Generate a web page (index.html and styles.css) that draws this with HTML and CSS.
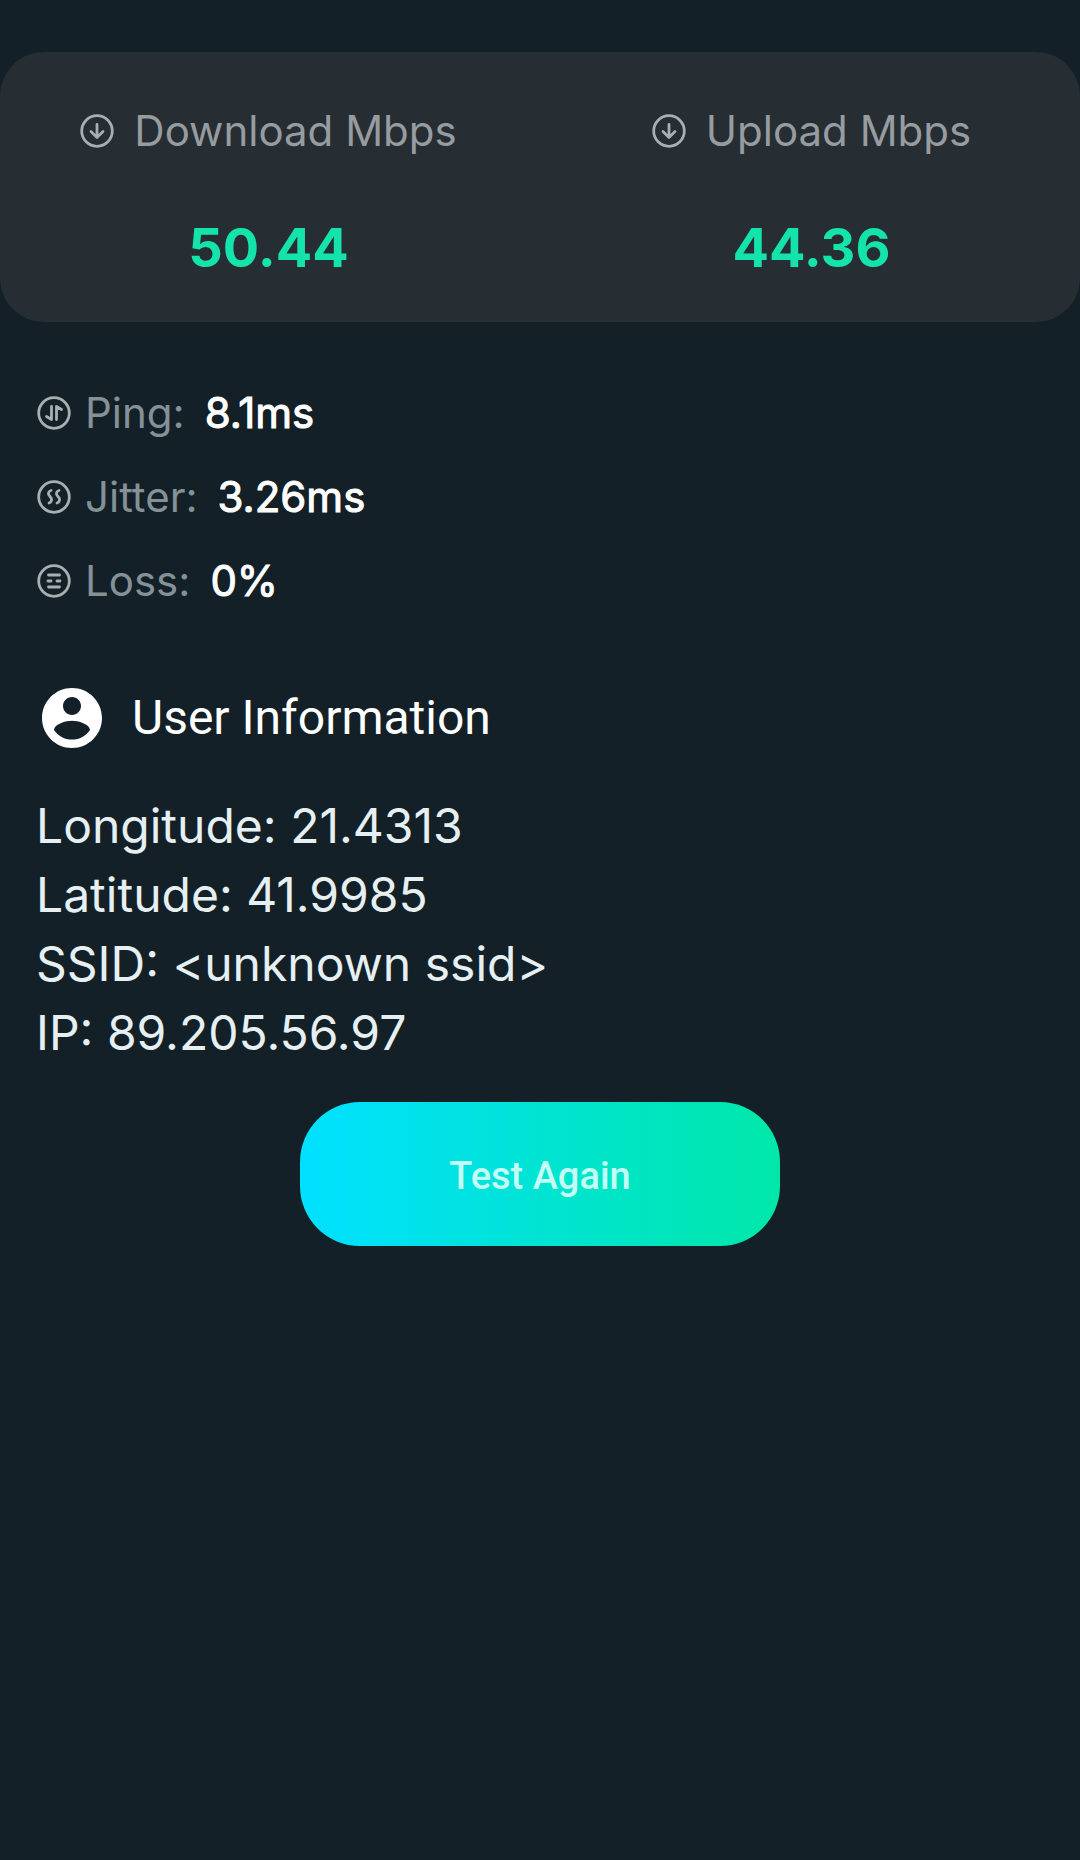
FILE: index.html
```html
<!DOCTYPE html>
<html lang="en">
<head>
  <meta charset="utf-8">
  <meta name="viewport" content="width=device-width, initial-scale=1">
  <title>Speed Test Results</title>
  <link rel="stylesheet" href="styles.css">
</head>
<body>
  <main class="page">
    <section class="speeds">
      <div class="speed">
        <h2 class="speed-label">
          <svg class="icon" viewBox="0 0 34 34" aria-hidden="true"><circle cx="17" cy="17" r="15.300"/><path d="M17 10.500v13M11 17.500l6 6 6-6"/></svg>
          Download Mbps
        </h2>
        <p class="speed-value">50.44</p>
      </div>
      <div class="speed">
        <h2 class="speed-label">
          <svg class="icon" viewBox="0 0 34 34" aria-hidden="true"><circle cx="17" cy="17" r="15.300"/><path d="M17 10.500v13M11 17.500l6 6 6-6"/></svg>
          Upload Mbps
        </h2>
        <p class="speed-value">44.36</p>
      </div>
    </section>

    <dl class="metrics">
      <div class="metric">
        <dt class="metric-label">
          <svg class="icon" viewBox="0 0 34 34" aria-hidden="true"><circle cx="17" cy="17" r="15.300"/><path d="M14.500 10.500v13L9.500 20.500M19.500 23.500v-13l5 3"/></svg>
          Ping:
        </dt>
        <dd class="metric-value">8.1ms</dd>
      </div>
      <div class="metric">
        <dt class="metric-label">
          <svg class="icon" viewBox="0 0 34 34" aria-hidden="true"><circle cx="17" cy="17" r="15.300"/><path d="M14 10.500c-3 1-3.500 3.500-1 6s2 5.500-1 6.500M22 10.500c-3 1-3.500 3.500-1 6s2 5.500-1 6.500"/></svg>
          Jitter:
        </dt>
        <dd class="metric-value">3.26ms</dd>
      </div>
      <div class="metric">
        <dt class="metric-label">
          <svg class="icon" viewBox="0 0 34 34" aria-hidden="true"><circle cx="17" cy="17" r="15.300"/><path d="M11.500 11h11M11 17h3M20 17h3M11.500 23h11"/></svg>
          Loss:
        </dt>
        <dd class="metric-value">0%</dd>
      </div>
    </dl>

    <section class="user">
      <h2 class="user-title">
        <svg class="user-icon" viewBox="2 2 20 20" aria-hidden="true"><path d="M12 2C6.480 2 2 6.480 2 12s4.480 10 10 10 10-4.480 10-10S17.520 2 12 2zm0 3c1.660 0 3 1.340 3 3s-1.340 3-3 3-3-1.340-3-3 1.340-3 3-3zm0 14.200c-2.500 0-4.710-1.280-6-3.220.030-1.990 4-3.080 6-3.080 1.990 0 5.970 1.090 6 3.080-1.290 1.940-3.500 3.220-6 3.220z"/></svg>
        User Information
      </h2>
      <ul class="user-details">
        <li>Longitude: 21.4313</li>
        <li>Latitude: 41.9985</li>
        <li>SSID: &lt;unknown ssid&gt;</li>
        <li>IP: 89.205.56.97</li>
      </ul>
    </section>

    <button class="test-button" type="button">Test Again</button>
  </main>
</body>
</html>
```
FILE: styles.css
```css
* {
  box-sizing: border-box;
  margin: 0;
  padding: 0;
}

body {
  min-height: 100vh;
  background: #142027;
  color: #e6f0f3;
  font-family: Inter, "Liberation Sans", sans-serif;
}

.page {
  display: flex;
  flex-direction: column;
  padding: 52px 0;
}

.speeds {
  display: grid;
  grid-template-columns: 1fr 1fr;
  gap: 6px;
  padding: 51px 0 40px;
  border-radius: 44px;
  background: #262d33;
}

.speed {
  display: flex;
  flex-direction: column;
  align-items: center;
  gap: 55px;
}

.speed-label {
  display: flex;
  align-items: center;
  gap: 20px;
  color: #969c9f;
  font-size: 42px;
  font-weight: 400;
  line-height: 56px;
}

.speed-value {
  color: #14e4ac;
  font-size: 54px;
  font-weight: 700;
  line-height: 68px;
}

.icon {
  flex: none;
  width: 34px;
  height: 34px;
  fill: none;
  stroke: #a6afb1;
  stroke-width: 2.8;
  stroke-linecap: round;
  stroke-linejoin: round;
}

.metrics {
  padding: 49px 37px 0;
}

.metric {
  display: flex;
  align-items: center;
  gap: 20px;
  font-size: 42px;
  line-height: 84px;
}

.metric-label {
  display: flex;
  align-items: center;
  gap: 14px;
  color: #849297;
  font-weight: 400;
}

.metric-value {
  color: #fff;
  font-weight: 400;
  -webkit-text-stroke: 1px #fff;
}

.user {
  padding: 65px 36px 0;
}

.user-title {
  display: flex;
  align-items: center;
  gap: 30px;
  padding-left: 6px;
  color: #fff;
  font-family: Roboto, "Liberation Sans", sans-serif;
  font-size: 48px;
  font-weight: 400;
  line-height: 60px;
}

.user-icon {
  flex: none;
  width: 60px;
  height: 60px;
  fill: #fff;
}

.user-details {
  padding-top: 43px;
  font-size: 48px;
  font-weight: 400;
  line-height: 69px;
  list-style: none;
}

.test-button {
  align-self: center;
  width: 480px;
  max-width: 100%;
  height: 144px;
  margin-top: 35px;
  padding-top: 4px;
  border: 0;
  border-radius: 60px;
  background: linear-gradient(90deg, #00e0ff, #00e7a8);
  color: #c4fff6;
  font-family: Roboto, "Liberation Sans", sans-serif;
  font-size: 38px;
  font-weight: 500;
}
```
